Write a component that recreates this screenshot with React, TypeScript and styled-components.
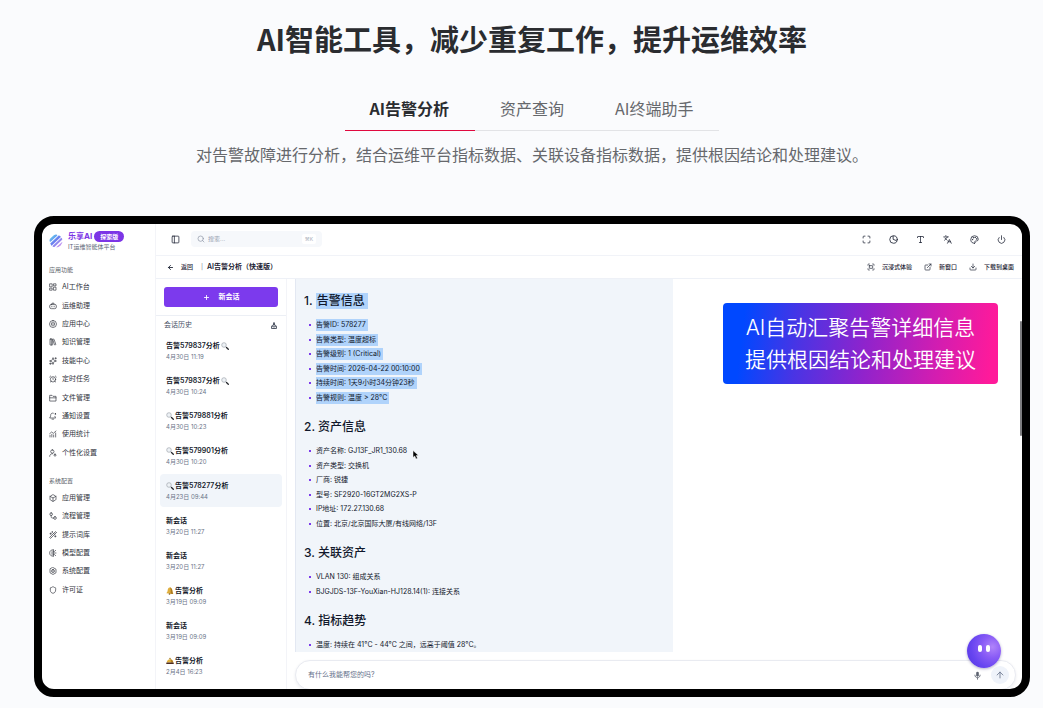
import React from "react";
import styled, { createGlobalStyle } from "styled-components";
import {
  AlarmClock,
  ArrowLeft,
  ArrowUp,
  Box,
  Download,
  ExternalLink,
  Fullscreen,
  Languages,
  LibraryBig,
  Maximize,
  Palette,
  PanelLeft,
  Plus,
  Power,
  Search,
  Shield,
  Sparkles,
  Type,
  WandSparkles,
} from "lucide-react";

const GlobalStyle = createGlobalStyle`
  *, *::before, *::after { box-sizing: border-box; }
  body {
    margin: 0;
    background: #fafbfd;
    font-family: "Noto Sans CJK SC", sans-serif;
    -webkit-font-smoothing: antialiased;
  }
  h1, h2, h3, p, ul { margin: 0; padding: 0; }
  ul { list-style: none; }
  button { font: inherit; border: 0; background: none; padding: 0; cursor: pointer; color: inherit; }
  a { color: inherit; text-decoration: none; }
  svg { display: block; flex: none; }
`;

const Page = styled.main`
  padding: 17px 13px 11px 34px;
`;

const Title = styled.h1`
  text-align: center;
  font-size: 29px;
  line-height: 42px;
  font-weight: 700;
  color: #2a2c30;
`;

const Tabs = styled.div`
  display: flex;
  width: fit-content;
  margin: 29px auto 0;
  border-bottom: 1px solid #e2e3e6;
`;

const Tab = styled.button<{ $active?: boolean }>`
  height: 43px;
  margin-bottom: -1px;
  padding: 0 26px 0 25px;
  font-size: 16px;
  line-height: 40px;
  padding-bottom: 2px;
  font-weight: ${(p) => (p.$active ? 700 : 400)};
  color: ${(p) => (p.$active ? "#2a2c30" : "#66686c")};
  border-bottom: 1px solid ${(p) => (p.$active ? "#e0093f" : "transparent")};
`;

const Lead = styled.p`
  margin-top: 11px;
  text-align: center;
  font-size: 16px;
  line-height: 24px;
  color: #66686c;
`;

const Device = styled.section`
  position: relative;
  margin-top: 50px;
  display: flex;
  overflow: hidden;
  border: 8px solid #000;
  border-radius: 20px;
  background: #fff;
  font-family: Inter, "Noto Sans CJK SC", sans-serif;
  font-size: 7px;
  line-height: 10px;
  color: #1c2233;
`;

const Sidebar = styled.nav`
  flex: none;
  width: 114px;
  padding: 7px 7px 0;
  border-right: 1px solid #f3f4f8;
`;

const Brand = styled.div`
  display: flex;
  align-items: center;
  gap: 5px;
  height: 19px;
  margin-bottom: 15px;
`;

const BrandName = styled.div`
  display: flex;
  align-items: center;
  gap: 2px;
  font-size: 8px;
  font-weight: 700;
  color: #7c35e6;
`;

const Badge = styled.span`
  padding: 0 6px;
  border-radius: 6px;
  background: #7c35e6;
  color: #fff;
  font-size: 6px;
  line-height: 11px;
`;

const BrandNote = styled.div`
  font-size: 6px;
  line-height: 9px;
  color: #5c6577;
`;

const GroupLabel = styled.h2`
  margin-bottom: 3px;
  font-size: 6px;
  line-height: 10px;
  font-weight: 400;
  color: #5a5f69;
`;

const NavList = styled.ul<{ $height: number }>`
  display: grid;
  grid-auto-rows: 1fr;
  height: ${(p) => p.$height}px;
  margin-bottom: 14px;
`;

const NavLink = styled.a`
  display: flex;
  align-items: center;
  gap: 5px;
  height: 100%;
  color: #30343c;
`;

const Workspace = styled.div`
  flex: 1;
  min-width: 0;
  display: flex;
  flex-direction: column;
`;

const TopBar = styled.header`
  display: flex;
  align-items: center;
  height: 32px;
  padding: 0 16px 1px 15px;
  border-bottom: 1px solid #f1f3f8;
`;

const SearchBox = styled.label`
  display: flex;
  align-items: center;
  gap: 3px;
  width: 131px;
  height: 16px;
  margin: 0 auto 0 11px;
  padding: 0 6px;
  border-radius: 4px;
  background: #f6f8fb;
  color: #8b94a5;
`;

const SearchInput = styled.input`
  flex: 1;
  min-width: 0;
  padding: 0;
  border: 0;
  outline: 0;
  background: none;
  font: inherit;
  font-size: 6px;
  &::placeholder { color: #98a1b1; opacity: 1; }
`;

const Shortcut = styled.kbd`
  padding: 0 3px;
  border-radius: 2px;
  background: #fff;
  font: inherit;
  font-size: 5px;
  line-height: 10px;
  color: #a5adba;
`;

const Tools = styled.div`
  display: flex;
  gap: 18px;
`;

const SubBar = styled.div`
  display: flex;
  align-items: center;
  height: 23px;
  padding: 0 8px 0 11px;
  border-bottom: 1px solid #eef1f7;
`;

const BarButton = styled.button`
  display: flex;
  align-items: center;
  gap: 7px;
  font-size: 6px;
  font-weight: 500;
  color: #1c2233;
`;

const Divider = styled.span`
  margin: 0 4px 0 8px;
  color: #6c7484;
  font-size: 6px;
`;

const BarTitle = styled.h2`
  flex: 1;
  font-size: 7px;
  line-height: 10px;
  font-weight: 600;
`;

const BarActions = styled.div`
  display: flex;
  gap: 12px;
`;

const Columns = styled.div`
  flex: 1;
  display: flex;
`;

const Sessions = styled.aside`
  flex: none;
  width: 131px;
  border-right: 1px solid #f3f4f8;
`;

const NewChatArea = styled.div`
  padding: 8px;
  border-bottom: 1px solid #eceff5;
`;

const NewChat = styled.button`
  display: flex;
  align-items: center;
  justify-content: center;
  gap: 9px;
  width: 100%;
  height: 20px;
  border-radius: 3px;
  background: #7c3aed;
  color: #fff;
  font-weight: 600;
`;

const HistoryHead = styled.div`
  display: flex;
  align-items: center;
  justify-content: space-between;
  height: 18px;
  padding: 0 9px 0 8px;
  color: #475066;
`;

const SessionList = styled.ul`
  display: grid;
  gap: 2px;
  padding: 0 4px 5px;
`;

const Session = styled.li<{ $active?: boolean }>`
  height: 33px;
  padding: 6px;
  border-radius: 4px;
  background: ${(p) => (p.$active ? "#f1f5fa" : "transparent")};
`;

const SessionTitle = styled.h3`
  display: flex;
  align-items: center;
  gap: 1px;
  font-size: 7px;
  line-height: 11px;
  font-weight: 600;
  color: #161c2c;
`;

const SessionDate = styled.p`
  font-size: 6px;
  line-height: 11px;
  color: #6a7487;
`;

const Chat = styled.div`
  flex: 1;
  min-width: 0;
  padding-left: 8px;
`;

const Messages = styled.div`
  display: flex;
  align-items: flex-start;
`;

const Answer = styled.article`
  width: 52%;
  padding: 12px 8px 0;
  border-left: 1px solid #e3e8f2;
  background: #f1f5fa;
  color: #11182b;
`;

const Heading = styled.h2`
  margin: 0 0 7px;
  font-size: 12px;
  line-height: 20px;
  font-weight: 500;
`;

const Facts = styled.ul<{ $height: number }>`
  display: grid;
  grid-auto-rows: 1fr;
  height: ${(p) => p.$height}px;
  & + ${Heading} { margin-top: 12px; }
`;

const Fact = styled.li`
  display: flex;
  align-items: center;
  gap: 5px;
  padding-left: 5px;
  &::before {
    content: "";
    width: 2px;
    height: 2px;
    background: #7c3aed;
  }
`;

const Marked = styled.mark`
  padding: 1px 2px 1px 0;
  background: #b0d3fb;
  color: inherit;
`;

const HeadingMark = styled(Marked)`
  display: inline-block;
  padding: 0 3px 0 1px;
  line-height: 16px;
`;

const FactText = styled.span`
  position: relative;
`;

const Pointer = styled.svg`
  position: absolute;
  left: 100%;
  top: 4px;
  margin-left: 5px;
`;

const Callout = styled.p`
  width: 275px;
  margin: 24px 24px 0 auto;
  padding: 9px 0 8px;
  border-radius: 4px;
  background: linear-gradient(97deg, #0048ff 8%, #4a34e4 28%, #9023cc 52%, #d41db0 78%, #ff1a9a 97%);
  color: #fff;
  text-align: center;
  font-weight: 350;
  font-size: 21px;
  line-height: 32px;
`;

const Composer = styled.form`
  display: flex;
  align-items: center;
  height: 30px;
  margin: 8px 6px -1px 0;
  padding: 0 6px 0 12px;
  border: 1px solid #e9ebf1;
  border-radius: 15px;
  background: #fff;
  box-shadow: 0 1px 3px rgba(30, 40, 80, 0.08);
`;

const Prompt = styled.input`
  flex: 1;
  min-width: 0;
  padding: 0;
  border: 0;
  outline: 0;
  background: none;
  font: inherit;
  &::placeholder { color: #66718a; opacity: 1; }
`;

const SendButton = styled.button`
  display: flex;
  align-items: center;
  justify-content: center;
  width: 18px;
  height: 18px;
  margin-left: 9px;
  border-radius: 50%;
  background: #eff3fa;
  color: #66718a;
`;

const Assistant = styled.button`
  position: absolute;
  right: 21px;
  bottom: 21px;
  display: flex;
  justify-content: center;
  gap: 4px;
  width: 34px;
  height: 34px;
  padding-top: 11px;
  border-radius: 50%;
  background: radial-gradient(circle at 75% 38%, #b084fa 0%, #8a5cf6 32%, #6644f0 65%, #5334e0 100%);
  box-shadow: 0 1px 3px rgba(60, 50, 120, 0.4);
`;

const Eye = styled.span`
  width: 4px;
  height: 7px;
  border-radius: 2px;
  background: #fff;
`;

const ScrollThumb = styled.div`
  position: absolute;
  top: 97px;
  right: 0;
  width: 2px;
  height: 115px;
  border-radius: 1px;
  background: #7d7d80;
`;

const Logo = () => (
  <svg width="14" height="14" viewBox="0 0 28 28" aria-hidden="true">
    <defs>
      <linearGradient id="logoFill" gradientUnits="userSpaceOnUse" x1="3" y1="3" x2="25" y2="25">
        <stop offset="0" stopColor="#5fd8ee" />
        <stop offset="0.45" stopColor="#6a7ff0" />
        <stop offset="0.75" stopColor="#a58cf0" />
        <stop offset="1" stopColor="#d79af2" />
      </linearGradient>
      <clipPath id="logoClip">
        <circle cx="14" cy="14" r="13" />
      </clipPath>
    </defs>
    <g clipPath="url(#logoClip)" stroke="url(#logoFill)" strokeLinecap="round">
      <path d="M2 13 14 2" strokeWidth="5" />
      <path d="M3 22 22 4" strokeWidth="5" />
      <path d="M8 26 26 9" strokeWidth="4" />
      <path d="M17 27 27 18" strokeWidth="4" />
    </g>
  </svg>
);

const Magnifier = () => (
  <svg width="8" height="8" viewBox="0 0 16 16" aria-hidden="true">
    <circle cx="6" cy="6" r="4.6" fill="#eef2f6" stroke="#9ba1a9" strokeWidth="1.3" />
    <path d="m9.6 9.6 1.4 1.4" stroke="#777c84" strokeWidth="1.6" />
    <path d="m11 11 3.6 3.6" stroke="#24262b" strokeWidth="2.6" strokeLinecap="round" />
  </svg>
);

const BellEmoji = () => (
  <svg width="8" height="8" viewBox="0 0 16 16" aria-hidden="true">
    <path d="M7.500 1C4.500 1 3.500 4 3.300 7 3.100 9.500 2 10.500.8 12.500L14.500 14c-.6-2-1.500-3-1.700-6C12.600 4.500 11 1.200 7.500 1Z" fill="#dfae3c" />
    <path d="M7.500 1c2.500 2.500 2.300 7 1.500 12.400l5.500.6c-.6-2-1.500-3-1.700-6C12.600 4.500 11 1.200 7.500 1Z" fill="#ad7a22" />
    <circle cx="7" cy="14" r="1.600" fill="#7d5818" />
  </svg>
);

const DeskBell = () => (
  <svg width="8" height="8" viewBox="0 0 16 16" aria-hidden="true">
    <circle cx="8" cy="3" r="1.500" fill="#9b7420" />
    <path d="M1.500 11c0-4 2.700-6.500 6.500-6.500s6.500 2.500 6.500 6.500Z" fill="#e3b23c" />
    <path d="M8 4.500c3.800 0 6.500 2.500 6.500 6.500h-5C10 8 9.500 6 8 4.500Z" fill="#b27f22" />
    <rect x="0.500" y="11" width="15" height="3.200" rx="1" fill="#4b2a20" />
  </svg>
);

const ClearIcon = () => (
  <svg width="6" height="7" viewBox="0 0 12 14" fill="none" stroke="#343b4b" strokeWidth="1.600" aria-hidden="true">
    <path d="M5 1.500h2v4H5zM2.500 8.500c0-2 1-3 2.500-3h2c1.500 0 2.500 1 2.500 3M1 8.500h10V13H1zM4.500 13v-2M7.500 13v-2" />
  </svg>
);

const ClockIcon = () => (
  <svg width="9" height="9" viewBox="0 0 24 24" fill="none" stroke="currentColor" strokeWidth="2.200" strokeLinecap="round" aria-hidden="true">
    <circle cx="12" cy="12" r="10" />
    <path d="M11 3v8.500l8.500 3.500" />
  </svg>
);

const MicIcon = () => (
  <svg width="9" height="9" viewBox="0 0 24 24" fill="none" stroke="#5d6370" strokeWidth="2.200" strokeLinecap="round" aria-hidden="true">
    <rect x="8.500" y="2" width="7" height="13" rx="3.500" fill="#5d6370" stroke="none" />
    <path d="M5 11c0 4 3 7 7 7s7-3 7-7M12 18v4" />
  </svg>
);

const glyphs = {
  dashboard: "M3 2.500h6.500v9H3zM14.500 2.500H21v6h-6.500zM3 15.500h6.500v6H3zM14.500 12.500H21v9h-6.500z",
  robot: "M7 7h10a5 5 0 0 1 5 5v3a5 5 0 0 1-5 5H7a5 5 0 0 1-5-5v-3a5 5 0 0 1 5-5ZM9 7l1-4h4l1 4M8.500 12.500v2M15.500 12.500v2",
  brain: "M12 1.500a10.500 10.500 0 1 0 0 21 10.500 10.500 0 0 0 0-21ZM12 6v12M8.500 7.500c-2 2-2 7 0 9M15.500 7.500c2 2 2 7 0 9",
  folder: "M2 20V4h7l3 3h9v13ZM2 11.500h19",
  bellDot: "M13 3.500C8 2 5 5.500 5 10c0 4-1.500 5.500-3 8h18c-1-1.500-2-3-2.400-5M9 21.500h5M19 4.500a1.500 1.500 0 1 1 0 3 1.500 1.500 0 0 1 0-3Z",
  chart: "M3 21v-5M8.500 21v-8M14 21v-6M20 21V9M2 11l6-5 5 4 8-7",
  userDot: "M10 2.500a5 5 0 1 1 0 10 5 5 0 0 1 0-10ZM2 22c0-5 3.500-8 9-8M18 15.500a3 3 0 1 1 0 6 3 3 0 0 1 0-6Z",
  flow: "M6.500 2.500a4 4 0 1 1 0 8 4 4 0 0 1 0-8ZM18 14a4 4 0 1 1 0 8 4 4 0 0 1 0-8ZM6.500 10.500V14c0 3 1.500 4 4 4H14",
  model: "M13 2.500C6 2 2 6 2 12s4 10 11 9.500M13 2.500v19M9 8v8M13 7h4l3-3M13 12h8M13 17h4l3 3",
  hex: "m12 1.500 9 5.200v10.600l-9 5.200-9-5.200V6.700ZM12 7.500a4.500 4.500 0 1 1 0 9 4.500 4.500 0 0 1 0-9ZM12 11v2",
};

const glyph = (name: keyof typeof glyphs) => () => (
  <svg
    width="8"
    height="8"
    viewBox="0 0 24 24"
    fill="none"
    stroke="currentColor"
    strokeWidth="2"
    strokeLinecap="round"
    strokeLinejoin="round"
    aria-hidden="true"
  >
    <path d={glyphs[name]} />
  </svg>
);

type IconType = React.ComponentType<{ size?: number; strokeWidth?: number }>;
type NavEntry = [string, IconType];

const appNav: NavEntry[] = [
  ["AI工作台", glyph("dashboard")],
  ["运维助理", glyph("robot")],
  ["应用中心", glyph("brain")],
  ["知识管理", LibraryBig],
  ["技能中心", Sparkles],
  ["定时任务", AlarmClock],
  ["文件管理", glyph("folder")],
  ["通知设置", glyph("bellDot")],
  ["使用统计", glyph("chart")],
  ["个性化设置", glyph("userDot")],
];

const systemNav: NavEntry[] = [
  ["应用管理", Box],
  ["流程管理", glyph("flow")],
  ["提示词库", WandSparkles],
  ["模型配置", glyph("model")],
  ["系统配置", glyph("hex")],
  ["许可证", Shield],
];

type Mark = "search" | "bell" | "desk";
interface SessionEntry {
  title: string;
  date: string;
  before?: Mark;
  after?: Mark;
  active?: boolean;
}

const sessions: SessionEntry[] = [
  { title: "告警579837分析", date: "4月30日 11:19", after: "search" },
  { title: "告警579837分析", date: "4月30日 10:24", after: "search" },
  { title: "告警579881分析", date: "4月30日 10:23", before: "search" },
  { title: "告警579901分析", date: "4月30日 10:20", before: "search" },
  { title: "告警578277分析", date: "4月23日 09:44", before: "search", active: true },
  { title: "新会话", date: "3月20日 11:27" },
  { title: "新会话", date: "3月20日 11:27" },
  { title: "告警分析", date: "3月19日 09:09", before: "bell" },
  { title: "新会话", date: "3月19日 09:09" },
  { title: "告警分析", date: "2月4日 16:23", before: "desk" },
];

const marks: Record<Mark, React.ReactNode> = {
  search: <Magnifier />,
  bell: <BellEmoji />,
  desk: <DeskBell />,
};

const alarmFacts = [
  "告警ID: 578277",
  "告警类型: 温度超标",
  "告警级别: 1 (Critical)",
  "告警时间: 2026-04-22 00:10:00",
  "持续时间: 1天9小时34分钟23秒",
  "告警规则: 温度 > 28°C",
];

const assetFacts = [
  "资产名称: GJ13F_JR1_130.68",
  "资产类型: 交换机",
  "厂商: 锐捷",
  "型号: SF2920-16GT2MG2XS-P",
  "IP地址: 172.27.130.68",
  "位置: 北京/北京国际大厦/有线网络/13F",
];

const relatedFacts = ["VLAN 130: 组成关系", "BJGJDS-13F-YouXian-HJ128.14(1): 连接关系"];

const NavGroup = ({ label, entries, height }: { label: string; entries: NavEntry[]; height: number }) => (
  <>
    <GroupLabel>{label}</GroupLabel>
    <NavList $height={height}>
      {entries.map(([name, Icon]) => (
        <li key={name}>
          <NavLink href="#">
            <Icon size={8} strokeWidth={2} />
            {name}
          </NavLink>
        </li>
      ))}
    </NavList>
  </>
);

export default function App() {
  return (
    <>
      <GlobalStyle />
      <Page>
        <Title>AI智能工具，减少重复工作，提升运维效率</Title>
        <Tabs role="tablist">
          <Tab role="tab" aria-selected="true" $active>AI告警分析</Tab>
          <Tab role="tab" aria-selected="false">资产查询</Tab>
          <Tab role="tab" aria-selected="false">AI终端助手</Tab>
        </Tabs>
        <Lead>对告警故障进行分析，结合运维平台指标数据、关联设备指标数据，提供根因结论和处理建议。</Lead>

        <Device>
          <Sidebar>
            <Brand>
              <Logo />
              <div>
                <BrandName>
                  乐享AI <Badge>探索版</Badge>
                </BrandName>
                <BrandNote>IT运维智能体平台</BrandNote>
              </div>
            </Brand>
            <NavGroup label="应用功能" entries={appNav} height={184} />
            <NavGroup label="系统配置" entries={systemNav} height={110} />
          </Sidebar>

          <Workspace>
            <TopBar>
              <button aria-label="侧栏"><PanelLeft size={9} /></button>
              <SearchBox>
                <Search size={8} />
                <SearchInput placeholder="搜索..." aria-label="搜索" />
                <Shortcut>⌘K</Shortcut>
              </SearchBox>
              <Tools>
                <button aria-label="全屏"><Maximize size={9} /></button>
                <button aria-label="时间"><ClockIcon /></button>
                <button aria-label="字体"><Type size={9} /></button>
                <button aria-label="语言"><Languages size={9} /></button>
                <button aria-label="主题"><Palette size={9} /></button>
                <button aria-label="退出"><Power size={9} /></button>
              </Tools>
            </TopBar>
            <SubBar>
              <BarButton>
                <ArrowLeft size={7} strokeWidth={3} />
                返回
              </BarButton>
              <Divider>|</Divider>
              <BarTitle>AI告警分析（快速版）</BarTitle>
              <BarActions>
                <BarButton><Fullscreen size={8} />沉浸式体验</BarButton>
                <BarButton><ExternalLink size={8} />新窗口</BarButton>
                <BarButton><Download size={8} />下载到桌面</BarButton>
              </BarActions>
            </SubBar>

            <Columns>
              <Sessions>
                <NewChatArea>
                  <NewChat><Plus size={7} strokeWidth={3} />新会话</NewChat>
                </NewChatArea>
                <HistoryHead>
                  会话历史
                  <button aria-label="清空"><ClearIcon /></button>
                </HistoryHead>
                <SessionList>
                  {sessions.map((s, i) => (
                    <Session key={i} $active={s.active}>
                      <SessionTitle>
                        {s.before && marks[s.before]}
                        {s.title}
                        {s.after && marks[s.after]}
                      </SessionTitle>
                      <SessionDate>{s.date}</SessionDate>
                    </Session>
                  ))}
                </SessionList>
              </Sessions>

              <Chat>
                <Messages>
                  <Answer>
                    <Heading>1. <HeadingMark>告警信息</HeadingMark></Heading>
                    <Facts $height={87}>
                      {alarmFacts.map((f) => (
                        <Fact key={f}><Marked>{f}</Marked></Fact>
                      ))}
                    </Facts>
                    <Heading>2. 资产信息</Heading>
                    <Facts $height={87}>
                      {assetFacts.map((f, i) => (
                        <Fact key={f}>
                          <FactText>
                            {f}
                            {i === 0 && (
                              <Pointer width="7" height="10" viewBox="0 0 14 20" aria-hidden="true">
                                <path d="M2 1v14l3.500-3 2.500 6 3-1.300L8.500 11H13Z" fill="#000" stroke="#fff" strokeWidth="1" />
                              </Pointer>
                            )}
                          </FactText>
                        </Fact>
                      ))}
                    </Facts>
                    <Heading>3. 关联资产</Heading>
                    <Facts $height={29}>
                      {relatedFacts.map((f) => (
                        <Fact key={f}>{f}</Fact>
                      ))}
                    </Facts>
                    <Heading>4. 指标趋势</Heading>
                    <Facts $height={14}>
                      <Fact>温度: 持续在 41°C - 44°C 之间，远高于阈值 28°C。</Fact>
                    </Facts>
                  </Answer>
                  <Callout>
                    AI自动汇聚告警详细信息
                    <br />
                    提供根因结论和处理建议
                  </Callout>
                </Messages>
                <Composer onSubmit={(e) => e.preventDefault()}>
                  <Prompt placeholder="有什么我能帮您的吗?" aria-label="消息" />
                  <button type="button" aria-label="语音"><MicIcon /></button>
                  <SendButton aria-label="发送"><ArrowUp size={10} /></SendButton>
                </Composer>
              </Chat>
            </Columns>
          </Workspace>
          <ScrollThumb />
          <Assistant aria-label="助手">
            <Eye />
            <Eye />
          </Assistant>
        </Device>
      </Page>
    </>
  );
}
